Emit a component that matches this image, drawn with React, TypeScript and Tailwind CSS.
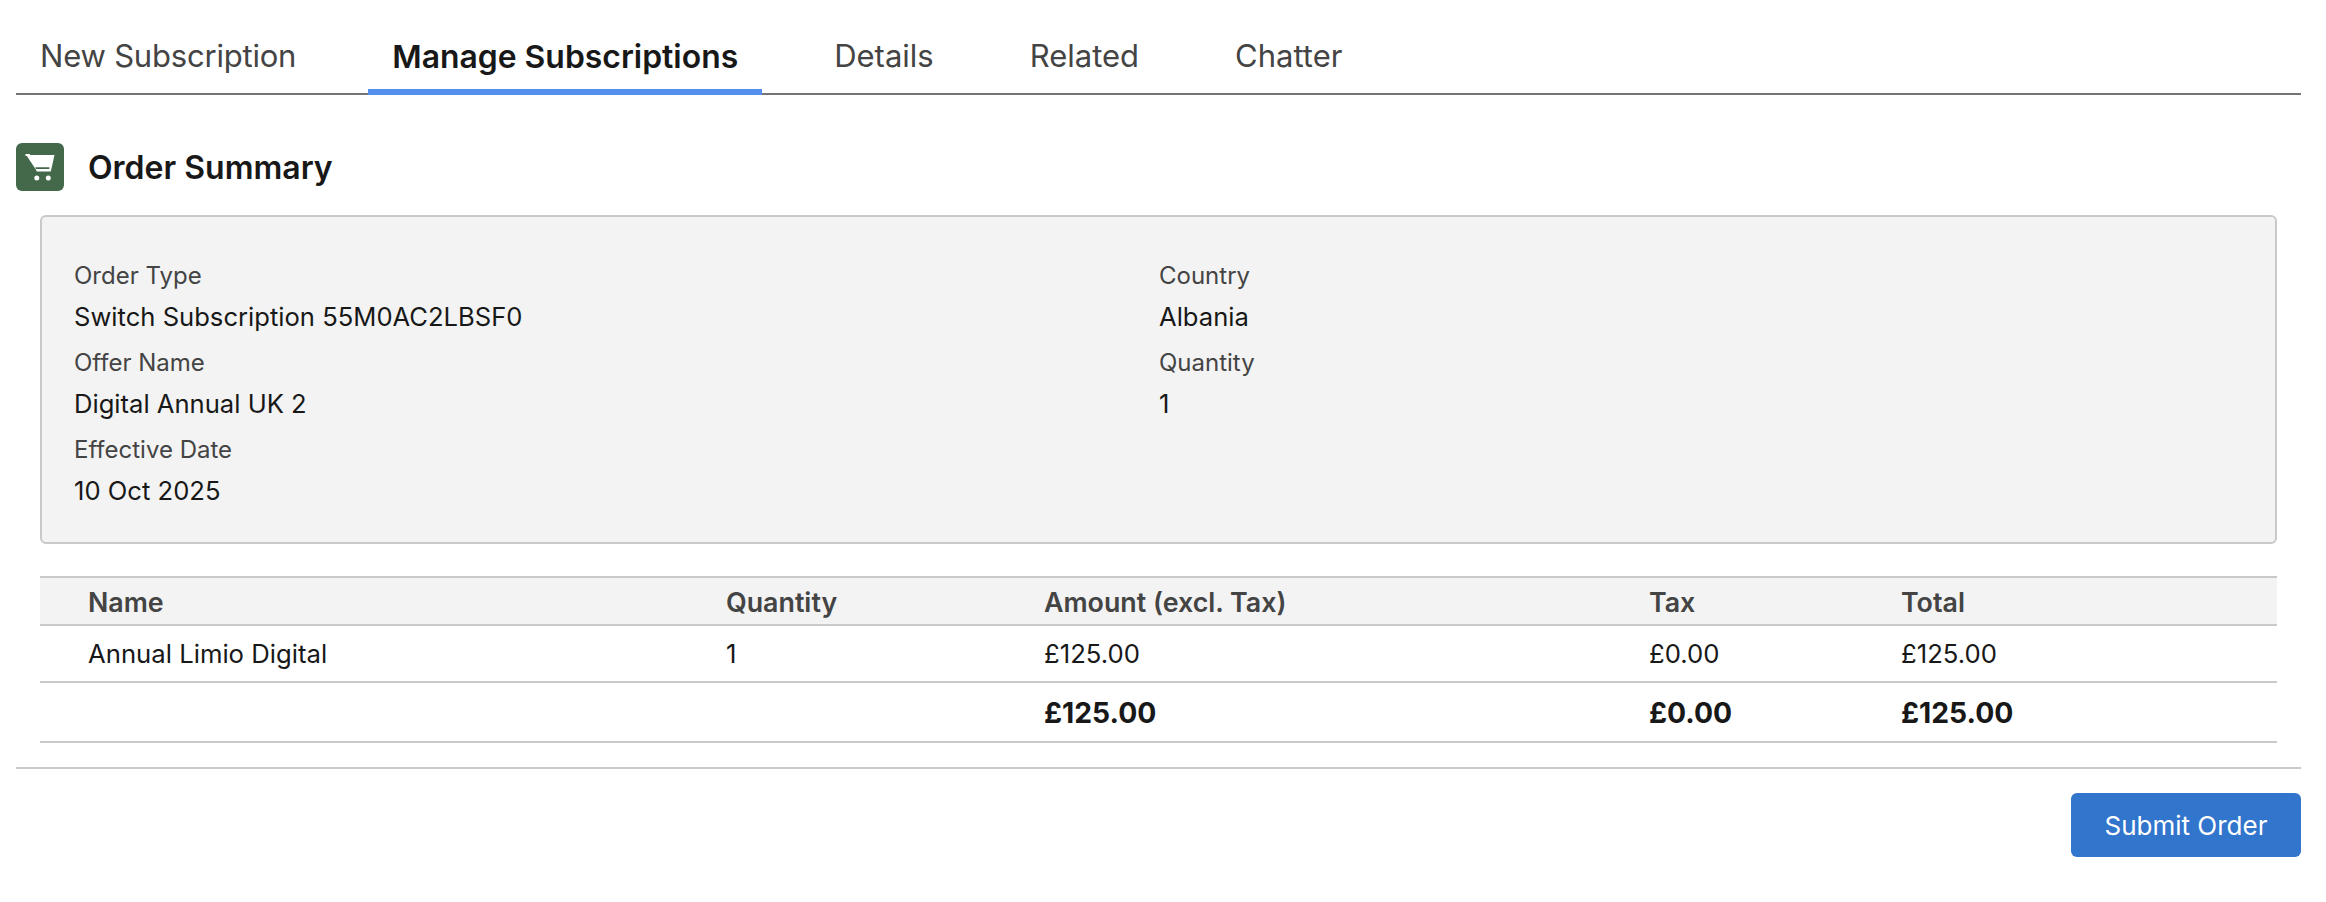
import React from 'react';

const summaryLeft = [
  { label: 'Order Type', value: 'Switch Subscription 55M0AC2LBSF0' },
  { label: 'Offer Name', value: 'Digital Annual UK 2' },
  { label: 'Effective Date', value: '10 Oct 2025' },
];

const summaryRight = [
  { label: 'Country', value: 'Albania' },
  { label: 'Quantity', value: '1' },
];

const tabs = ['New Subscription', 'Manage Subscriptions', 'Details', 'Related', 'Chatter'];

const tableCols = 'grid grid-cols-[638px_318px_605px_252px_1fr] items-center pl-12';

const CartIcon = () => (
  <svg viewBox="0 0 48 48" className="w-12 h-12 rounded-md bg-[#44694a] shrink-0">
    <path d="M9.5 11h3.6c.6 0 1 .3 1.2 1h24.2l-3 13.5-.8 3H20.6l-.4-1.4z" fill="#fff" />
    <path d="M19.4 24.3h14v1.7h-13.6z" fill="#44694a" />
    <path d="M9.5 11h3.6l.6 2H9.500z" fill="#fff" />
    <circle cx="20.8" cy="35" r="2.5" fill="#fff" />
    <circle cx="32.3" cy="35" r="2.5" fill="#fff" />
  </svg>
);

const Field = ({ label, value }: { label: string; value: string }) => (
  <div className="h-[87px]">
    <div className="h-[42px] pt-0.5 flex items-center text-[24px] text-[#444444]">{label}</div>
    <div className="h-[41px] pt-0.5 flex items-center text-[25.6px] text-[#181818]">{value}</div>
  </div>
);

export default function App() {
  return (
    <div className="w-[2326px] h-[902px] bg-white pl-4 pr-[25px] font-['Inter','Liberation_Sans',sans-serif] overflow-hidden">
      {/* Tabs */}
      <div className="flex gap-12 h-[95px] border-b-2 border-[#747474]">
        {tabs.map((tab) =>
          tab === 'Manage Subscriptions' ? (
            <div key={tab} className="h-[95px] px-6 pt-[33px] border-b-[6px] border-[#5390ee] text-[31.9px] font-semibold text-[#181818]">{tab}</div>
          ) : (
            <div key={tab} className={tab === 'New Subscription' ? 'px-6 pt-[33px] text-[31px] tracking-[-0.2px] text-[#444444]' : 'px-6 pt-[33px] text-[31px] text-[#444444]'}>{tab}</div>
          )
        )}
      </div>

      {/* Section header */}
      <div className="flex items-center gap-6 mt-12">
        <CartIcon />
        <h2 className="text-[32px] pt-0.5 leading-none font-semibold text-[#181818]">Order Summary</h2>
      </div>

      {/* Summary panel */}
      <div className="mt-6 mx-6 h-[329px] border-2 border-[#c9c9c9] rounded-md bg-[#f3f3f3] pl-8 pt-[37px] grid grid-cols-[1085px_1fr]">
        <div>
          {summaryLeft.map((f) => <Field key={f.label} {...f} />)}
        </div>
        <div>
          {summaryRight.map((f) => <Field key={f.label} {...f} />)}
        </div>
      </div>

      {/* Table */}
      <div className="mt-8 mx-6">
        <div className={`${tableCols} h-[50px] pt-0.5 border-y-2 border-[#c9c9c9] bg-[#f3f3f3] text-[26.8px] font-semibold text-[#444444]`}>
          <div>Name</div>
          <div>Quantity</div>
          <div>Amount (excl. Tax)</div>
          <div>Tax</div>
          <div>Total</div>
        </div>
        <div className={`${tableCols} h-[57px] pt-0.5 border-b-2 border-[#c9c9c9] text-[25.7px] text-[#181818]`}>
          <div>Annual Limio Digital</div>
          <div>1</div>
          <div>£125.00</div>
          <div>£0.00</div>
          <div>£125.00</div>
        </div>
        <div className={`${tableCols} h-[60px] pt-0.5 border-b-2 border-[#c9c9c9] text-[28.3px] font-bold text-[#181818]`}>
          <div></div>
          <div></div>
          <div>£125.00</div>
          <div>£0.00</div>
          <div>£125.00</div>
        </div>
      </div>

      {/* Footer */}
      <div className="mt-6 border-t-2 border-[#c9c9c9] flex justify-end pt-6">
        <button className="w-[230px] h-16 rounded-md bg-[#3175cd] text-[26px] text-white">Submit Order</button>
      </div>
    </div>
  );
}
